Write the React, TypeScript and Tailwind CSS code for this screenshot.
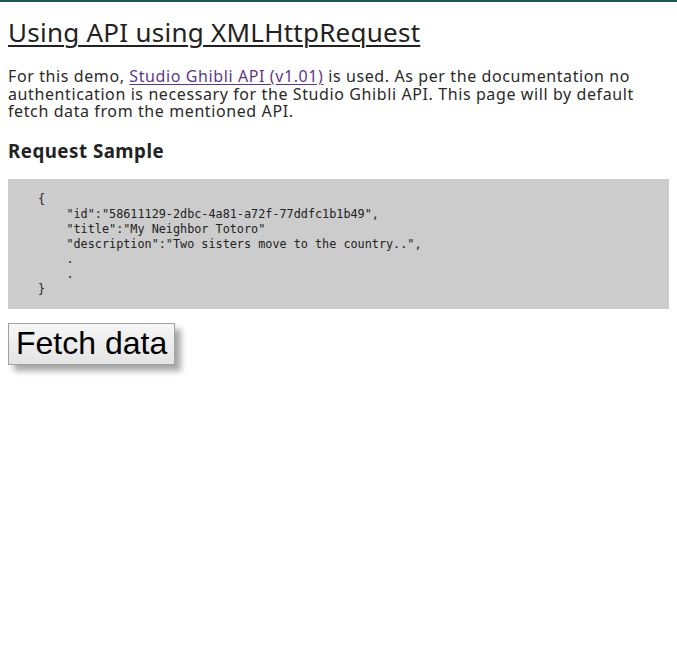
export default function App() {
  const sample = `{
    "id":"58611129-2dbc-4a81-a72f-77ddfc1b1b49",
    "title":"My Neighbor Totoro"
    "description":"Two sisters move to the country..",
    .
    .
}`;

  return (
    <main className="min-h-screen bg-white border-t-2 border-[#1d5b52] px-2 font-['Noto_Sans',sans-serif] text-[#222]">
      <h2 className="pt-[14px] text-[26px] leading-[32px] tracking-[0.25px] underline underline-offset-[3px] decoration-[2px]">
        Using API using XMLHttpRequest
      </h2>

      <p className="mt-[20px] text-[16px] leading-[17.5px] tracking-[0.6px] text-[#2a2a2a]">
        For this demo,{" "}
        <a href="#" className="text-[#5c3a87] underline underline-offset-2">
          Studio Ghibli API (v1.01)
        </a>{" "}
        is used. As per the documentation no authentication is necessary for the Studio Ghibli API. This page will by default
        fetch data from the mentioned API.
      </p>

      <h3 className="mt-[18px] text-[18.7px] leading-[24px] tracking-[0.5px] font-bold">Request Sample</h3>

      <div className="mt-[16px] bg-[#cccccc] pt-[13px] pb-[12px] pl-[30px]">
        <pre className="font-['DejaVu_Sans_Mono',monospace] text-[11.8px] leading-[15px] text-[#222]">{sample}</pre>
      </div>

      <button className="mt-[14px] h-[42px] px-[7px] border border-[#a0a0a0] bg-gradient-to-b from-[#f6f6f6] to-[#e4e4e4] shadow-[6px_6px_6px_#a8a8a8] font-['Liberation_Sans',Arial,sans-serif] text-[32px] leading-[37px] text-black">
        Fetch data
      </button>
    </main>
  );
}
